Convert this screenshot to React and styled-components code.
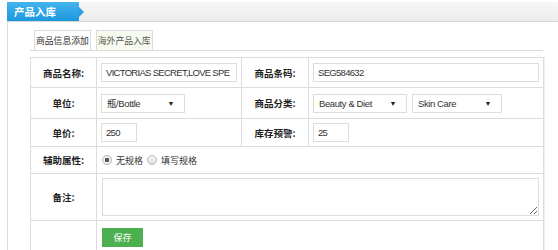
import React from "react";
import styled, {createGlobalStyle} from "styled-components";

const Global = createGlobalStyle`
  html, body {
    margin: 0;
    background: #fff;
    font-family: "Liberation Sans", "Noto Sans CJK SC", sans-serif;
    font-size: 12px;
    color: #333;
  }
`

const latin = `"Liberation Sans", "Noto Sans CJK SC", sans-serif`
const cjk = `"Noto Sans CJK SC", sans-serif`

const Page = styled.div`
  width: 558px;
  height: 250px;
  padding-top: 2px;
  box-sizing: border-box;
  overflow: hidden;
`

const TitleBar = styled.div`
  display: flex;
  height: 19px;
  margin-left: 7px;
  background: linear-gradient(#f7f7f7, #ececec);
  border-bottom: 1px solid #d6d6d6;
`

const TitleTab = styled.div`
  position: relative;
  width: 65px;
  padding-left: 7px;
  line-height: 19px;
  color: #fff;
  font-family: ${cjk};
  font-size: 10.5px;
  font-weight: bold;
  background: linear-gradient(#45b4ee, #1c97dc);

  &:after {
    content: "";
    position: absolute;
    right: -5px;
    top: 5px;
    border-left: 5px solid #2aa2e2;
    border-top: 5px solid transparent;
    border-bottom: 5px solid transparent;
  }
`

const Body = styled.div`
  margin-left: 7px;
  border-left: 1px solid #dcdcdc;
  padding: 8px 15px 0 22px;
  height: 230px;
`

const Tabs = styled.div`
  display: flex;
  gap: 5px;
  padding-left: 4px;
  border-bottom: 1px solid #dcdcdc;
`

const Tab = styled.div`
  height: 19px;
  line-height: 19px;
  padding: 0 1px;
  font-family: ${cjk};
  font-size: 8.8px;
  border: 1px solid #dcdcdc;
  border-bottom: none;
  margin-bottom: ${p => (p.$active ? "-1px" : "0")};
  background: ${p => (p.$active ? "#fff" : "#f7faee")};
  color: ${p => (p.$active ? "#333" : "#555")};
`

const Table = styled.table`
  margin-top: 6px;
  width: 513px;
  border-collapse: collapse;
  table-layout: fixed;
  box-shadow: 1px 0 0 #eee;

  td {
    border: 1px solid #dcdcdc;
    padding: 0 4px;
  }
`

const Row = styled.tr`
  height: ${p => p.$h}px;
`

const Label = styled.td`
  text-align: center;
  font-weight: bold;
  color: #1e1e1e;
  font-family: ${cjk};
  font-size: 9.5px;
`

const Field = styled.div`
  box-sizing: border-box;
  width: ${p => p.$w}px;
  height: 19px;
  line-height: 17px;
  padding: 0 4px;
  border: 1px solid #ddd;
  color: #333;
  white-space: nowrap;
  overflow: hidden;
  font-family: ${latin};
  font-size: 9.5px;
  letter-spacing: -0.7px;
`

const SelectBox = styled(Field)`
  display: flex;
  justify-content: space-between;
  padding: 0 10px 0 5px;
  letter-spacing: -0.4px;
`

const Caret = styled.span`
  font-size: 7px;
  color: #222;
`

const Inline = styled.div`
  display: flex;
  gap: 5px;
`

const RadioGroup = styled.div`
  display: flex;
  align-items: center;
  font-family: ${cjk};
  font-size: 9px;
`

const Radio = styled.span`
  box-sizing: border-box;
  width: 10px;
  height: 10px;
  border-radius: 50%;
  border: 1px solid #bbb;
  background: ${p => (p.$on ? "radial-gradient(#555 0 2px, #eee 2.5px)" : "linear-gradient(#fafafa, #ddd)")};
  margin: 0 4px 0 1px;
`

const RadioText = styled.span`
  margin-right: 3px;
`

const Area = styled.textarea`
  display: block;
  box-sizing: border-box;
  width: 437px;
  height: 38px;
  border: 1px solid #ddd;
  margin-left: 1px;
`

const SaveButton = styled.button`
  width: 41px;
  height: 19px;
  margin-left: 1px;
  border: none;
  background: #4cb050;
  color: #fff;
  font-family: ${cjk};
  font-size: 9px;
  padding: 0;
`

export default function App() {
  return (
    <Page>
      <Global/>
      <TitleBar>
        <TitleTab>产品入库</TitleTab>
      </TitleBar>
      <Body>
        <Tabs>
          <Tab $active>商品信息添加</Tab>
          <Tab>海外产品入库</Tab>
        </Tabs>
        <Table>
          <colgroup>
            <col style={{width: 66}}/>
            <col style={{width: 145}}/>
            <col style={{width: 67}}/>
            <col style={{width: 235}}/>
          </colgroup>
          <tbody>
            <Row $h={30}>
              <Label>商品名称:</Label>
              <td><Field $w={136}>VICTORIAS SECRET,LOVE SPE</Field></td>
              <Label>商品条码:</Label>
              <td><Field $w={226}>SEG584632</Field></td>
            </Row>
            <Row $h={31}>
              <Label>单位:</Label>
              <td><SelectBox $w={84}>瓶/Bottle<Caret>▼</Caret></SelectBox></td>
              <Label>商品分类:</Label>
              <td>
                <Inline>
                  <SelectBox $w={94}>Beauty &amp; Diet<Caret>▼</Caret></SelectBox>
                  <SelectBox $w={90}>Skin Care<Caret>▼</Caret></SelectBox>
                </Inline>
              </td>
            </Row>
            <Row $h={28}>
              <Label>单价:</Label>
              <td><Field $w={36}>250</Field></td>
              <Label>库存预警:</Label>
              <td><Field $w={36}>25</Field></td>
            </Row>
            <Row $h={27}>
              <Label>辅助属性:</Label>
              <td colSpan={3}>
                <RadioGroup>
                  <Radio $on/>
                  <RadioText>无规格</RadioText>
                  <Radio/>
                  <RadioText>填写规格</RadioText>
                </RadioGroup>
              </td>
            </Row>
            <Row $h={47}>
              <Label>备注:</Label>
              <td colSpan={3}><Area/></td>
            </Row>
            <Row $h={34}>
              <Label/>
              <td colSpan={3}><SaveButton>保存</SaveButton></td>
            </Row>
          </tbody>
        </Table>
      </Body>
    </Page>
  );
}
